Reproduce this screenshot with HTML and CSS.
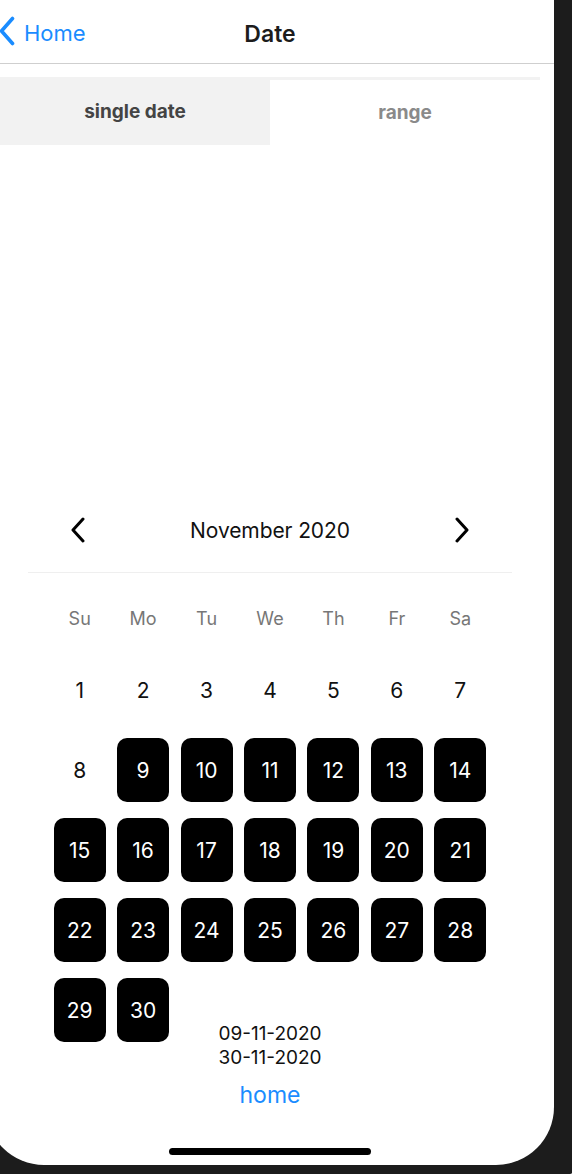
FILE: index.html
```html
<!DOCTYPE html>
<html lang="en">
<head>
<meta charset="utf-8">
<title>Date</title>
<link rel="stylesheet" href="styles.css">
</head>
<body>
<div class="device">
  <div class="screen">
    <header class="nav">
      <div class="nav-left">
        <a class="back">
          <svg class="back-icon" width="16" height="30" viewBox="0 0 16 30"><path d="M13.5 2.5 L2.5 15 L13.5 27.5" fill="none" stroke="currentColor" stroke-width="3.6" stroke-linecap="round" stroke-linejoin="round"/></svg>
          <span>Home</span>
        </a>
      </div>
      <h1 class="nav-title">Date</h1>
      <div class="nav-right"></div>
    </header>

    <div class="tabs">
      <div class="tab tab-active">single date</div>
      <div class="tab">range</div>
    </div>

    <section class="calendar">
      <div class="cal-head">
        <svg class="cal-arrow" width="16" height="26" viewBox="0 0 16 26"><path d="M13 2 L3 13 L13 24" fill="none" stroke="currentColor" stroke-width="3" stroke-linecap="round" stroke-linejoin="round"/></svg>
        <span class="cal-month">November 2020</span>
        <svg class="cal-arrow" width="16" height="26" viewBox="0 0 16 26"><path d="M3 2 L13 13 L3 24" fill="none" stroke="currentColor" stroke-width="3" stroke-linecap="round" stroke-linejoin="round"/></svg>
      </div>
      <div class="weekdays">
        <span>Su</span><span>Mo</span><span>Tu</span><span>We</span><span>Th</span><span>Fr</span><span>Sa</span>
      </div>
      <div class="days">
        <span class="day">1</span><span class="day">2</span><span class="day">3</span><span class="day">4</span><span class="day">5</span><span class="day">6</span><span class="day">7</span>
        <span class="day">8</span><span class="day sel">9</span><span class="day sel">10</span><span class="day sel">11</span><span class="day sel">12</span><span class="day sel">13</span><span class="day sel">14</span>
        <span class="day sel">15</span><span class="day sel">16</span><span class="day sel">17</span><span class="day sel">18</span><span class="day sel">19</span><span class="day sel">20</span><span class="day sel">21</span>
        <span class="day sel">22</span><span class="day sel">23</span><span class="day sel">24</span><span class="day sel">25</span><span class="day sel">26</span><span class="day sel">27</span><span class="day sel">28</span>
        <span class="day sel">29</span><span class="day sel">30</span>
      </div>
    </section>

    <div class="dates">
      <div>09-11-2020</div>
      <div>30-11-2020</div>
    </div>
    <a class="home-link">home</a>

    <div class="home-indicator"></div>
  </div>
</div>
</body>
</html>
```

FILE: styles.css
```css
* { box-sizing: border-box; }

html, body {
  margin: 0;
  padding: 0;
}

body {
  width: 572px;
  height: 1174px;
  overflow: hidden;
  position: relative;
  background: linear-gradient(135deg, #8c8c8c, #bdbdbd);
  font-family: Inter, "Liberation Sans", sans-serif;
  color: #111;
}

.device {
  position: absolute;
  left: -40px;
  top: -40px;
  width: 620px;
  height: 1216px;
  padding: 40px 26px 11px 26px;
  background: #1c1c1c;
  border-radius: 0 0 18px 0;
}

.screen {
  width: 568px;
  height: 1165px;
  background: #fff;
  border-radius: 0 0 58px 58px;
  display: flex;
  flex-direction: column;
  overflow: hidden;
}

/* Navigation bar */
.nav {
  height: 64px;
  padding-top: 4px;
  border-bottom: 1px solid #cfcfcf;
  display: grid;
  grid-template-columns: 1fr auto 1fr;
  align-items: center;
}

.nav-left {
  padding-left: 13px;
}

.back {
  display: inline-flex;
  align-items: center;
  gap: 9px;
  color: #1a8cff;
  font-size: 22px;
  line-height: 30px;
}

.back-icon {
  display: block;
  margin-top: -4px;
}

.nav-title {
  margin: 0;
  font-size: 23px;
  font-weight: 600;
  line-height: 30px;
  color: #1c1c1c;
}

/* Tabs */
.tabs {
  margin: 13px 14px 0;
  height: 68px;
  display: flex;
  align-items: flex-end;
  background: #f2f2f2;
}

.tab {
  flex: 1;
  height: 65px;
  display: flex;
  align-items: center;
  justify-content: center;
  background: #fff;
  color: #8a8a8a;
  font-size: 19px;
  font-weight: 700;
}

.tab-active {
  height: 68px;
  background: #f2f2f2;
  color: #444;
}

/* Calendar */
.calendar {
  margin: 360px 42px 0;
}

.cal-head {
  height: 68px;
  padding: 0 42px 17px;
  border-bottom: 1px solid #efefef;
  display: flex;
  align-items: center;
  justify-content: space-between;
  color: #000;
}

.cal-arrow {
  display: block;
}

.cal-month {
  font-size: 21px;
  letter-spacing: -0.1px;
  color: #111;
}

.weekdays {
  margin-top: 13px;
  height: 64px;
  padding: 0 20px;
  display: grid;
  grid-template-columns: repeat(7, 1fr);
  align-items: center;
  justify-items: center;
  font-size: 18px;
  color: #777;
}

.days {
  height: 372px;
  padding: 0 20px;
  display: grid;
  grid-template-columns: repeat(7, 1fr);
  grid-auto-rows: 80px;
  align-items: center;
  justify-items: center;
}

.day {
  width: 52px;
  height: 64px;
  border-radius: 10px;
  display: flex;
  align-items: center;
  justify-content: center;
  font-size: 21px;
  color: #111;
}

.day.sel {
  background: #000;
  color: #fff;
}

/* Footer texts */
.dates {
  text-align: center;
  font-size: 19px;
  line-height: 24px;
  color: #111;
}

.home-link {
  margin-top: 10px;
  text-align: center;
  font-size: 23px;
  line-height: 30px;
  color: #1a8cff;
}

.home-indicator {
  width: 202px;
  height: 7px;
  margin: auto auto 10px;
  border-radius: 4px;
  background: #000;
}
```
